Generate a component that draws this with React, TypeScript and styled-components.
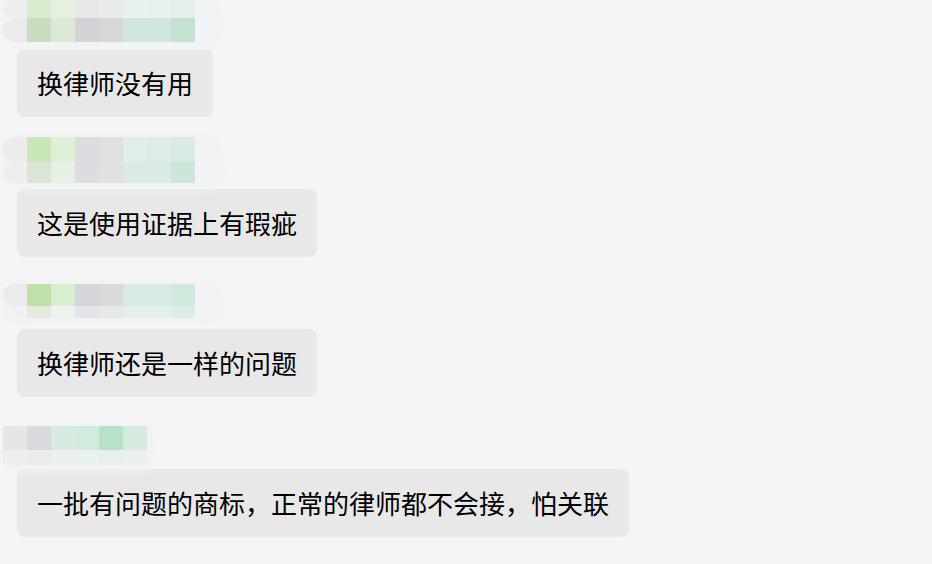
import styled, { createGlobalStyle } from "styled-components";

const GlobalStyle = createGlobalStyle`
  html, body {
    margin: 0;
    padding: 0;
    background: #f5f5f5;
  }
  body {
    font-family: "Noto Sans CJK SC", "Noto Sans", sans-serif;
  }
`;

const Page = styled.div`
  width: 932px;
  height: 564px;
  overflow: hidden;
  background: #f5f5f5;
  display: flex;
  flex-direction: column;
`;

const Group = styled.div`
  display: flex;
  flex-direction: column;
  align-items: flex-start;
`;

// the slot above each bubble where the blurred sender name sits
const NameSlot = styled.div<{ $h: number; $pb: number }>`
  height: ${(p) => p.$h}px;
  padding: 0 0 ${(p) => p.$pb}px 3px;
  box-sizing: border-box;
  display: flex;
  align-items: flex-end;
`;

const Mosaic = styled.div`
  position: relative;
  display: flex;
  flex-direction: column;

  &::before {
    content: "";
    position: absolute;
    inset: -3px -8px -6px 0;
    background: #f1f2f4;
    border-radius: 16px;
    filter: blur(5px);
  }
`;

const MosaicRow = styled.div<{ $h: number }>`
  position: relative;
  display: flex;
  height: ${(p) => p.$h}px;
`;

const Cell = styled.div<{ $c: string; $w: number }>`
  width: ${(p) => p.$w}px;
  height: 100%;
  background: ${(p) => p.$c};

  &:first-child.cap {
    border-radius: 12px 0 0 12px;
  }
  &:last-child.cap {
    border-radius: 0 12px 12px 0;
  }
`;

const Bubble = styled.div`
  margin-left: 17px;
  background: #e8e8e8;
  border-radius: 8px;
  padding: 0 20px;
  height: 68px;
  display: flex;
  align-items: center;
  font-size: 26px;
  line-height: 36px;
  color: #000;
  white-space: nowrap;
`;

interface Msg {
  slot: number;
  pad: number;
  rowH: [number, number];
  caps: boolean;
  rows: [string[], string[]];
  text: string;
}

const TAIL = "#f1f3f6";

const messages: Msg[] = [
  {
    slot: 49,
    pad: 7,
    rowH: [18, 24],
    caps: true,
    rows: [
      ["#efefef", "#d9ecd0", "#e5f0e1", "#e7e8ea", "#e9eaec", "#e9f2f1", "#e7f1ee", "#e5f0ed", TAIL],
      ["#ebebeb", "#c9dec0", "#dde9d7", "#d2d3d6", "#d6d7d9", "#d0e6dc", "#d0e6dc", "#c4e2d0", TAIL],
    ],
    text: "换律师没有用",
  },
  {
    slot: 72,
    pad: 6,
    rowH: [25, 21],
    caps: true,
    rows: [
      ["#ececec", "#c8e6b8", "#ddefd6", "#dcdde0", "#dfe0e2", "#dfeeea", "#dcede7", "#d8ebe4", TAIL],
      ["#eeeeee", "#dbe5d5", "#e7f0e4", "#dcdde0", "#e0e1e3", "#d9ebe3", "#d9ebe3", "#cde6d8", TAIL],
    ],
    text: "这是使用证据上有瑕疵",
  },
  {
    slot: 72,
    pad: 11,
    rowH: [22, 12],
    caps: true,
    rows: [
      ["#ebebeb", "#bfe1a8", "#d9eed0", "#d4d5d8", "#d9dadc", "#d7ebe2", "#d6ece3", "#d1e9dd", TAIL],
      ["#f0f1f3", "#e2ebde", "#eef2ed", "#e4e5e8", "#e6e7e9", "#e4efeb", "#e2efea", "#dcede5", TAIL],
    ],
    text: "换律师还是一样的问题",
  },
  {
    slot: 72,
    pad: 4,
    rowH: [24, 15],
    caps: false,
    rows: [
      ["#e6e6e8", "#d9dadd", "#d6ebe0", "#d3ebdf", "#b9e1c9", "#d6ebe0"],
      ["#eeeeef", "#ebebed", "#ecf1f0", "#ebf1ef", "#e8f0ec", "#ebf0ee"],
    ],
    text: "一批有问题的商标，正常的律师都不会接，怕关联",
  },
];

export default function App() {
  return (
    <>
      <GlobalStyle />
      <Page>
        {messages.map((m, i) => (
          <Group key={i}>
            <NameSlot $h={m.slot} $pb={m.pad}>
              <Mosaic>
                {m.rows.map((row, r) => (
                  <MosaicRow key={r} $h={m.rowH[r]}>
                    {row.map((c, k) => {
                      const isCap = m.caps && (k === 0 || k === row.length - 1);
                      return (
                        <Cell
                          key={k}
                          className={isCap ? "cap" : undefined}
                          $c={c}
                          $w={m.caps && k === row.length - 1 ? 20 : 24}
                        />
                      );
                    })}
                  </MosaicRow>
                ))}
              </Mosaic>
            </NameSlot>
            <Bubble>{m.text}</Bubble>
          </Group>
        ))}
      </Page>
    </>
  );
}
